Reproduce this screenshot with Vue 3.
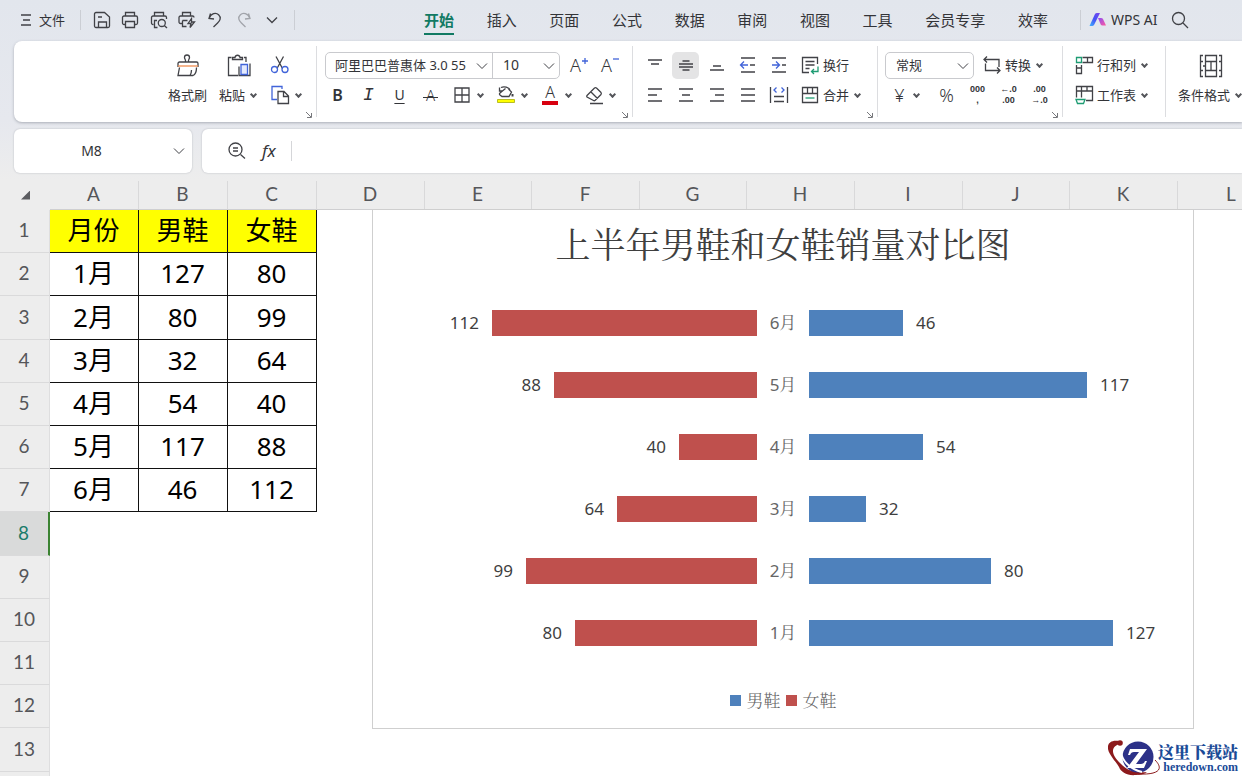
<script setup>
import { ref } from 'vue'

const icons = {
  menu: '<path d="M1 3h10M3 8h7M1 13h10"/>',
  save: '<path d="M16 17.500H4a1.500 1.500 0 0 1-1.500-1.500V4A1.500 1.500 0 0 1 4 2.500h8.500l5 4.500v9a1.500 1.500 0 0 1-1.500 1.500z"/><path d="M6.500 17.500v-5.500h8v5.500M6 7h4"/>',
  print: '<path d="M5.500 6V2.500h9V6M5.500 14.500H4A1.500 1.500 0 0 1 2.500 13V7.500A1.500 1.500 0 0 1 4 6h12a1.500 1.500 0 0 1 1.500 1.500V13a1.500 1.500 0 0 1-1.500 1.500h-1.500"/><path d="M5.500 11.500h9v6h-9z"/>',
  preview: '<path d="M5.500 6V2.500h9V6M4.500 14.500H4A1.500 1.500 0 0 1 2.500 13V7.500A1.500 1.500 0 0 1 4 6h12a1.500 1.500 0 0 1 1.500 1.500V9M8 10.500H5.500v7h3"/><circle cx="12.800" cy="13" r="3.500"/><path d="M15.300 15.500l2.700 2.500"/>',
  quick: '<path d="M5.500 6V2.500h8V6M5 13.500H3.500A1.500 1.500 0 0 1 2 12V7.500A1.500 1.500 0 0 1 3.500 6h12A1.500 1.500 0 0 1 17 7.500M5.500 10.500v6h4M5.500 10.500h5"/><path d="M14.500 8.500l-3.500 5h3l-1 4 4.500-5.500h-3z"/>',
  undo: '<path d="M5.500 3.500l-1.500 5 5 .5M4.200 8.300C6 3.200 11 2.200 13.600 4.700c3 2.800 1.400 6-1 8.300L8.500 17"/>',
  redo: '<path d="M14.500 3.500l1.500 5-5 .5M15.800 8.300C14 3.200 9 2.200 6.400 4.700c-3 2.800-1.400 6 1 8.300l4.100 4"/>',
  down: '<path d="M5 7.500l5 5 5-5"/>',
  search: '<circle cx="8.500" cy="8.500" r="6"/><path d="M13 13l5 5"/>',
  brush: '<path d="M9.500 8V6.500C9.500 5.500 8.500 4.800 8.500 3.500a2.500 2.500 0 0 1 5 0c0 1.300-1 2-1 3V8M2 13V9.500A1.500 1.500 0 0 1 3.500 8h17A1.500 1.500 0 0 1 22 9.500V13M3.500 13.500L2 21.500h15c2.500-1 3.500-5 3.500-8M15.500 16c0 2-.5 4-1.500 5.500"/><path stroke="#f08b4f" d="M2 12h20"/>',
  paste: '<path d="M4.500 3.500H1.500v18H11M17 3.500h2V8"/><path d="M5.500 5.500h10V3.500h-2.500c-.5-3-4.500-3-5 0H5.500z"/><path d="M12 12.500v9h11v-12"/><path stroke="#4164d9" fill="#e4eafe" d="M14 10.500h6.500v10H14z"/>',
  cut: '<path d="M6 1.500l6.500 12M13.500 1.500l-6.500 12"/><g stroke="#4164d9"><circle cx="4.500" cy="14.500" r="3"/><circle cx="15" cy="14.500" r="3"/></g>',
  copy: '<path stroke="#4164d9" d="M7 14.500H2v-13h10V4"/><path d="M8 6.500h6l4.500 4.500v7.500H8zM13.500 7v4.500h5"/>',
  fontUp: '<path stroke="#4164d9" d="M1 4h6M4 1v6"/>',
  fontDown: '<path stroke="#4164d9" d="M1 2h6"/>',
  border: '<path d="M3 3h14v14H3zM10 3v14M3 10h14"/>',
  fill: '<path d="M5 2.500c3-1.500 8-.5 9 3M3.500 2.500v3.500h3M9.500 3.500L4 8q-1 1 0 2l2 1.500h7L15.500 7l-3-3"/><path stroke-width="2" d="M16.500 9v2.500"/><path fill="#ffff00" stroke="#b9bd22" stroke-width="1" d="M1.500 14.500h17v3h-17z"/>',
  eraser: '<path d="M3 10.500L10.500 3q1-.7 2 0L17 7.500q.7 1 0 2L11 15.500q-.8.500-1.500 0L3 12q-.6-.7 0-1.500zM7 7l6.500 6.500M6 18.500h13"/>',
  top: '<path d="M3 5h14M6 9h8"/>',
  middle: '<path d="M6.500 6h7M3 9h14M3 12h14M6.500 15h7"/>',
  bottom: '<path d="M6 11h8M3 15h14"/>',
  outdent: '<path d="M3 3h14M12 10h5M3 17h14"/><path stroke="#4164d9" d="M10 10H2.500M6 6.500L2.500 10 6 13.500"/>',
  indent: '<path d="M3 3h14M13 10h4M3 17h14"/><path stroke="#4164d9" d="M3 10h7.500M7 6.500l3.500 3.500L7 13.500"/>',
  left: '<path d="M3 4h14M3 10h9M3 16h14"/>',
  center: '<path d="M3 4h14M6 10h8M3 16h14"/>',
  right: '<path d="M3 4h14M8 10h9M3 16h14"/>',
  justify: '<path d="M3 4h14M3 10h14M3 16h14"/>',
  spread: '<path d="M1.500 2v16M18.500 2v16M5 11.500h10M5 16.500h10"/><path stroke="#4164d9" d="M7.500 2.500L5 5l2.500 2.500M12.500 2.500L15 5l-2.500 2.500"/>',
  wrap: '<path d="M9 17.500H2.500v-15h15V9M5.500 6.500h9M5.500 10h9M5.500 13.500h4"/><path stroke="#1e9c73" d="M18 11.500v5h-6M14 14l-2.500 2.500L14 19"/>',
  merge: '<path d="M2.500 2.500h15v15h-15zM2.500 8.500h15M7.500 2.500v6M12.500 2.500v6"/><path stroke="#1e9c73" d="M5.500 13h9"/>',
  convert: '<path d="M5 1.500L2 4.500l3 3M2 4.500h15V12M15 12.500l3 3-3 3M18 15.500H3.500V8.500"/>',
  rowcol: '<path d="M8.500 2.500h10v5h-10M13.500 2.500v5M2.500 10v8.500h5V10M2.500 13h5"/><path stroke="#1e9c73" d="M2.500 2.500h5v5h-5z"/>',
  worksheet: '<path d="M2.500 12.500v-11h16v14H12M2.500 6h16M7.500 1.500v11M13 1.500v4.500"/><path stroke="#1e9c73" d="M2 14.500h9l-1.500 4h-6z"/>',
  conditional: '<path d="M4 1.500H1.500v21H4M20 1.500h2.500v21H20M1.500 7.500H4M1.500 16.500H4M20 7.500h2.500M20 16.500h2.500M6.500 1.500h11v6h-11zM6.500 16.500h11v6h-11zM12 7.500v9M4 12h3M6.500 7.500v9M17.500 7.500v9"/>',
  lookup: '<circle cx="8.500" cy="8.500" r="6.500"/><path d="M13.500 13.500l4.500 4M6 7h5M6 10h5"/>'
}

const quickAccess = [
  ['save', '保存'], ['print', '打印'], ['preview', '打印预览'], ['quick', '快速打印'],
  ['undo', '撤销'], ['redo', '恢复'], ['down', '更多']
]
const tabs = ['开始', '插入', '页面', '公式', '数据', '审阅', '视图', '工具', '会员专享', '效率']
const activeTab = ref('开始')
const vertical = [['top', '顶端对齐'], ['middle', '垂直居中'], ['bottom', '底端对齐'], ['outdent', '减少缩进'], ['indent', '增加缩进']]
const horizontal = [['left', '左对齐'], ['center', '水平居中'], ['right', '右对齐'], ['justify', '两端对齐'], ['spread', '分散对齐']]

const cellName = ref('M8')
const formula = ref('')
const columns = [
  ['A', 89], ['B', 89], ['C', 89], ['D', 108], ['E', 107], ['F', 108], ['G', 107],
  ['H', 108], ['I', 108], ['J', 107], ['K', 108], ['L', 108]
]
const numberedRows = 13
const data = [
  ['月份', '男鞋', '女鞋'],
  ['1月', 127, 80],
  ['2月', 80, 99],
  ['3月', 32, 64],
  ['4月', 54, 40],
  ['5月', 117, 88],
  ['6月', 46, 112]
]
const months = data.slice(1).reverse()
const axisMin = 10
const barStyle = (v) => ({ width: Math.round((v - axisMin) * 2.6) + 'px' })
</script>

<template>
  <div class="app">
    <header class="topbar">
      <button class="file"><svg class="i-menu" viewBox="0 0 12 16" v-html="icons.menu" />文件</button>
      <span class="rule" />
      <div class="quick">
        <button v-for="[icon, label] in quickAccess" :key="icon" :class="{ faded: icon === 'redo' }" :aria-label="label">
          <svg viewBox="0 0 20 20" v-html="icons[icon]" />
        </button>
      </div>
      <span class="rule" />
      <nav class="tabs">
        <button v-for="t in tabs" :key="t" :class="{ on: t === activeTab }" @click="activeTab = t">{{ t }}</button>
      </nav>
      <span class="rule" />
      <div class="assist">
        <button class="ai">
          <svg class="i-ai" viewBox="0 0 18 16">
            <defs>
              <linearGradient id="aiBlue" x1="0" y1="1" x2="1" y2="0"><stop offset="0" stop-color="#3fb4ff" /><stop offset=".5" stop-color="#4450f5" /><stop offset="1" stop-color="#7b45ee" /></linearGradient>
              <linearGradient id="aiPink" x1="0" y1="0" x2="1" y2="1"><stop offset="0" stop-color="#8b4df5" /><stop offset="1" stop-color="#ff5a9e" /></linearGradient>
            </defs>
            <path fill="url(#aiBlue)" stroke="none" d="M6 2q.6-1 2-1h3L5 13q-.6 1-2 1H.500z" />
            <path fill="url(#aiPink)" stroke="none" d="M9 6h3q1.500 0 2 1l3 6.500h-3.500q-1.300 0-1.800-1z" />
          </svg>
          WPS AI
        </button>
        <button aria-label="搜索"><svg viewBox="0 0 20 20" v-html="icons.search" /></button>
      </div>
    </header>

    <section class="ribbon">
      <div class="group clipboard">
        <button class="large"><svg class="i-large" viewBox="0 0 24 24" v-html="icons.brush" /><span>格式刷</span></button>
        <button class="large"><svg class="i-large" viewBox="0 0 24 24" v-html="icons.paste" /><span>粘贴<i class="chev" /></span></button>
        <div class="stack">
          <button class="row" aria-label="剪切"><svg viewBox="0 0 20 20" v-html="icons.cut" /></button>
          <button class="row" aria-label="复制"><svg viewBox="0 0 20 20" v-html="icons.copy" /><i class="chev" /></button>
        </div>
        <svg class="launch" viewBox="0 0 8 8"><path d="M1 1l5 5M6.500 2v4.500H2" /></svg>
      </div>

      <div class="group font">
        <div class="row">
          <div class="combo">
            <label class="pick family">
              <select aria-label="字体"><option>阿里巴巴普惠体 3.0 55</option></select>
              <svg class="i-down" viewBox="0 0 20 20" v-html="icons.down" />
            </label>
            <label class="pick size">
              <select aria-label="字号"><option>10</option></select>
              <svg class="i-down" viewBox="0 0 20 20" v-html="icons.down" />
            </label>
          </div>
          <button class="tool grow">A<svg viewBox="0 0 8 8" v-html="icons.fontUp" /></button>
          <button class="tool grow">A<svg viewBox="0 0 8 8" v-html="icons.fontDown" /></button>
        </div>
        <div class="row">
          <button class="tool bold">B</button>
          <button class="tool italic">I</button>
          <button class="tool under">U</button>
          <button class="tool strike">A</button>
          <button class="menu" aria-label="边框"><svg viewBox="0 0 20 20" v-html="icons.border" /><i class="chev" /></button>
          <button class="menu" aria-label="填充颜色"><svg viewBox="0 0 20 20" v-html="icons.fill" /><i class="chev" /></button>
          <button class="menu"><span class="ink">A</span><i class="chev" /></button>
          <button class="menu" aria-label="清除"><svg viewBox="0 0 20 20" v-html="icons.eraser" /><i class="chev" /></button>
        </div>
        <svg class="launch" viewBox="0 0 8 8"><path d="M1 1l5 5M6.500 2v4.500H2" /></svg>
      </div>

      <div class="group align">
        <div class="row">
          <button v-for="[icon, label] in vertical" :key="icon" class="tool" :class="{ pressed: icon === 'middle' }" :aria-label="label">
            <svg viewBox="0 0 20 20" v-html="icons[icon]" />
          </button>
          <button class="named"><svg viewBox="0 0 20 20" v-html="icons.wrap" />换行</button>
        </div>
        <div class="row">
          <button v-for="[icon, label] in horizontal" :key="icon" class="tool" :aria-label="label">
            <svg viewBox="0 0 20 20" v-html="icons[icon]" />
          </button>
          <button class="named"><svg viewBox="0 0 20 20" v-html="icons.merge" />合并<i class="chev" /></button>
        </div>
        <svg class="launch" viewBox="0 0 8 8"><path d="M1 1l5 5M6.500 2v4.500H2" /></svg>
      </div>

      <div class="group number">
        <div class="row">
          <div class="combo">
            <label class="pick format">
              <select aria-label="数字格式"><option>常规</option></select>
              <svg class="i-down" viewBox="0 0 20 20" v-html="icons.down" />
            </label>
          </div>
          <button class="named"><svg viewBox="0 0 20 20" v-html="icons.convert" />转换<i class="chev" /></button>
        </div>
        <div class="row">
          <button class="menu yen"><span>¥</span><i class="chev" /></button>
          <button class="tool percent">%</button>
          <button class="tool digits"><span>000</span><span>,</span></button>
          <button class="tool digits"><span>←.0</span><span>.00</span></button>
          <button class="tool digits"><span>.00</span><span>→.0</span></button>
        </div>
        <svg class="launch" viewBox="0 0 8 8"><path d="M1 1l5 5M6.500 2v4.500H2" /></svg>
      </div>

      <div class="group cells">
        <div class="row"><button class="named"><svg viewBox="0 0 20 20" v-html="icons.rowcol" />行和列<i class="chev" /></button></div>
        <div class="row"><button class="named"><svg viewBox="0 0 20 20" v-html="icons.worksheet" />工作表<i class="chev" /></button></div>
      </div>

      <div class="group styles">
        <button class="large"><svg class="i-large" viewBox="0 0 24 24" v-html="icons.conditional" /><span>条件格式<i class="chev" /></span></button>
      </div>
    </section>

    <section class="formula">
      <div class="namebox">
        <input v-model="cellName" aria-label="名称框">
        <button aria-label="展开名称框"><svg class="i-down" viewBox="0 0 20 20" v-html="icons.down" /></button>
      </div>
      <div class="fxbox">
        <button aria-label="查找"><svg viewBox="0 0 20 20" v-html="icons.lookup" /></button>
        <button class="fx">fx</button>
        <input v-model="formula" aria-label="编辑栏">
      </div>
    </section>

    <main class="sheet">
      <table>
        <colgroup>
          <col class="c-head">
          <col v-for="[name, width] in columns" :key="name" :style="{ width: width + 'px' }">
        </colgroup>
        <thead>
          <tr>
            <th class="corner" aria-label="全选"><i /></th>
            <th v-for="[name] in columns" :key="name" scope="col">{{ name }}</th>
          </tr>
        </thead>
        <tbody>
          <tr v-for="r in numberedRows + 1" :key="r" :class="{ current: r === 8, title: r === 1 }">
            <th scope="row">{{ r > numberedRows ? '' : r }}</th>
            <td v-for="([name], c) in columns" :key="name" :class="{ filled: data[r - 1] && c < 3 }">{{ data[r - 1]?.[c] }}</td>
          </tr>
        </tbody>
      </table>

      <figure class="chart">
        <figcaption>上半年男鞋和女鞋销量对比图</figcaption>
        <div class="plot">
          <div v-for="[month, men, women] in months" :key="month" class="pair">
            <div class="side women"><span>{{ women }}</span><i class="bar" :style="barStyle(women)" /></div>
            <span class="month">{{ month }}</span>
            <div class="side men"><i class="bar" :style="barStyle(men)" /><span>{{ men }}</span></div>
          </div>
        </div>
        <div class="legend">
          <span class="men"><i />男鞋</span>
          <span class="women"><i />女鞋</span>
        </div>
      </figure>
    </main>

    <a class="site" href="#">
      <svg class="i-site" viewBox="0 0 54 36">
        <path fill="#8c1a1c" stroke="none" d="M11 1C1-1-3 6 2 14c4 7 7 9 9 13 2 5 8 9 17 8 5 0 9-1 11-3-11 1-20-1-27-9C5 16 1 8 11 4z" />
        <circle cx="12" cy="3" r="2.800" fill="#8c1a1c" stroke="none" />
        <circle cx="30" cy="17" r="15.500" fill="#2c3188" stroke="none" />
        <path fill="none" stroke="#8c1a1c" stroke-width="1" d="M47 20c9 9 4 15-17 14" />
        <path fill="none" stroke="#fff" stroke-width="2" d="M13 12c1 9 9 17 21 20" />
        <path fill="#fff" stroke="none" d="M22 9h17L28 24h5q3 0 4-3h2l-3 7H19l12-16h-5q-3 0-4 3h-2z" />
      </svg>
      <span><b>这里下载站</b><small>heredown.com</small></span>
    </a>
  </div>
</template>

<style>
body {
  overflow: hidden;
}
</style>

<style scoped>
.app {
  --ink: #333438;
  --ui: "Noto Sans", "Noto Sans CJK SC", sans-serif;
  --song: "Noto Serif CJK SC", "Noto Sans CJK SC", serif;
  position: relative;
  display: flex;
  flex-direction: column;
  height: 100vh;
  overflow: hidden;
  background: linear-gradient(#e2e6ed, #e6e8ee 120px, #ededed 180px);
  color: var(--ink);
  font: 13px/20px var(--ui);
}
.app *, .app *::before, .app *::after { box-sizing: border-box; }
button, input, select {
  border: 0;
  padding: 0;
  background: none;
  color: inherit;
  font: inherit;
  outline: 0;
}
button {
  display: flex;
  align-items: center;
  justify-content: center;
  white-space: nowrap;
}
svg {
  flex: none;
  display: block;
  width: 20px;
  height: 20px;
  fill: none;
  stroke: #414247;
  stroke-width: 1.3;
}
.chev {
  flex: none;
  width: 5px;
  height: 5px;
  margin: 0 2px 2px;
  border: solid #55565b;
  border-width: 0 2px 2px 0;
  transform: rotate(45deg);
}

.topbar {
  display: flex;
  align-items: center;
  flex: none;
  height: 41px;
  padding: 0 0 1px 20px;
}
.file { gap: 7px; }
.i-menu { width: 12px; height: 16px; }
.rule {
  width: 1px;
  height: 20px;
  background: #cbced4;
}
.file + .rule { margin-left: 15px; }
.quick {
  display: flex;
  justify-content: space-between;
  width: 190px;
  margin: 0 12px 0 11px;
}
.faded { opacity: .4; }
.tabs {
  display: flex;
  flex: 1;
  justify-content: space-between;
  padding: 0 32px 0 129px;
}
.tabs button {
  height: 28px;
  margin-top: 2px;
  padding-bottom: 1px;
  border-bottom: 2px solid transparent;
  font-size: 15px;
}
.tabs .on {
  border-color: #117a63;
  color: #117a63;
  font-weight: 700;
}
.assist {
  display: flex;
  gap: 12px;
  width: 161px;
  padding-left: 8px;
}
.ai { gap: 4px; font-size: 14px; }
.i-ai { width: 18px; height: 16px; }

.ribbon {
  display: flex;
  flex: none;
  height: 81px;
  margin-left: 14px;
  border-radius: 8px 0 0 8px;
  background: #fff;
  box-shadow: 0 1px 3px #a9adb6;
}
.group {
  position: relative;
  flex: none;
  padding-top: 9px;
}
.group + .group::before {
  content: "";
  position: absolute;
  left: 0;
  top: 5px;
  bottom: 5px;
  width: 1px;
  background: #dcdde0;
}
.row {
  display: flex;
  align-items: center;
  height: 30px;
}
.row .chev, .large .chev { margin-left: 6px; }
.large {
  flex-direction: column;
  justify-content: flex-start;
  gap: 7px;
  padding-top: 4px;
}
.large span { display: flex; align-items: center; }
.i-large { width: 24px; height: 24px; }
.clipboard {
  display: flex;
  align-items: flex-start;
  gap: 12px;
  width: 302px;
  padding-left: 154px;
}
.font { width: 316px; padding-left: 6px; }
.align { width: 245px; padding-left: 7px; }
.number { width: 185px; padding-left: 8px; }
.cells { width: 103px; padding-left: 13px; }
.styles { padding-left: 13px; }
.launch {
  position: absolute;
  right: 3px;
  bottom: 3px;
  width: 8px;
  height: 8px;
  stroke: #77787c;
  stroke-width: 1;
}
.combo {
  display: flex;
  height: 27px;
  border: 1px solid #c9cace;
  border-radius: 5px;
}
.font .combo { margin: 0 4px 0 3px; }
.pick { position: relative; display: flex; }
.pick + .pick { border-left: 1px solid #c9cace; }
.pick select {
  appearance: none;
  width: 100%;
  padding-left: 9px;
}
.family { width: 166px; }
.size { width: 67px; }
.size select { padding-left: 10px; font-size: 14px; }
.format { width: 87px; }
.number .pick select { padding-left: 10px; }
.pick .i-down {
  position: absolute;
  right: 0;
  top: 3px;
  pointer-events: none;
}
.i-down { stroke-width: 1; }
.tool {
  width: 27px;
  height: 27px;
  margin: 0 2px;
  border-radius: 5px;
  font-size: 16px;
}
.pressed { background: #e4e4e5; }
.grow { font-size: 18px; font-weight: 300; }
.grow svg { width: 8px; height: 8px; margin-bottom: 8px; }
.bold { font-weight: 600; }
.italic { font-family: "Liberation Mono", monospace; font-style: italic; font-size: 18px; }
.under { text-decoration: underline; text-underline-offset: 3px; text-decoration-thickness: 1px; font-size: 14px; }
.strike { position: relative; font-size: 15px; font-weight: 300; }
.strike::after {
  content: "";
  position: absolute;
  left: 6px;
  right: 6px;
  top: 15px;
  height: 1px;
  background: var(--ink);
}
.menu {
  justify-content: flex-start;
  width: 44px;
  padding-left: 6px;
}
.ink {
  width: 16px;
  height: 20px;
  margin: 0 2px;
  border-bottom: 4px solid #d8000f;
  font-size: 16px;
  font-weight: 300;
  line-height: 15px;
}
.named svg { margin-right: 3px; }
.number .named { padding-left: 8px; }
.cells .named { margin-left: -1px; }
.align .named { padding-left: 6px; }
.yen { width: 46px; padding-left: 6px; }
.yen span { width: 17px; font-size: 18px; font-weight: 300; }
.percent { font-size: 18px; font-weight: 300; }
.digits {
  flex-direction: column;
  font: bold 9px/11px "Liberation Sans", sans-serif;
}

.formula {
  display: flex;
  flex: none;
  gap: 10px;
  height: 59px;
  padding: 7px 0 8px 14px;
}
.namebox, .fxbox {
  display: flex;
  align-items: center;
  border-radius: 6px;
  background: #fff;
  box-shadow: 0 0 2px #b4b7be;
}
.namebox { width: 178px; padding-right: 3px; }
.namebox input { flex: 1; min-width: 0; text-align: center; font-size: 14px; }
.fxbox { flex: 1; padding-left: 25px; border-radius: 6px 0 0 6px; }
.fx {
  margin: 0 15px;
  font: italic 17px/20px "Noto Sans", sans-serif;
}
.fxbox input {
  flex: 1;
  min-width: 0;
  height: 20px;
  padding-left: 8px;
  border-left: 1px solid #d5d6d9;
}

.sheet {
  position: relative;
  flex: 1;
  overflow: hidden;
  background: #fff;
}
table {
  width: 0;
  table-layout: fixed;
  border-collapse: separate;
  border-spacing: 0;
}
.c-head { width: 50px; }
th, td { padding: 0 1px 2px 0; text-align: center; }
th {
  background: #ededed;
  color: #55565a;
  font: 19px/26px Lato, sans-serif;
}
thead th {
  height: 29px;
  border-bottom: 1px solid #cfcfd1;
  border-right: 1px solid #d9d9da;
}
thead .corner { border-color: #ededed; }
.corner i {
  display: block;
  margin: 2px 0 0 21px;
  width: 9px;
  height: 9px;
  background: #5b5c60;
  clip-path: polygon(100% 0, 100% 100%, 0 100%);
}
tbody tr { height: 43px; }
tbody tr:nth-child(5n + 3) { height: 44px; }
tbody th { border-right: 1px solid #dededf; border-bottom: 1px solid #dadadb; }
.current th {
  border-right: 2px solid #3b8332;
  background: #d9dada;
  color: #1a7c6a;
}
.filled {
  border: solid #111;
  border-width: 0 1px 1px 0;
  color: #000;
  font: 26px/38px var(--ui);
}
.title .filled { background: #ff0; }

.chart {
  position: absolute;
  left: 372px;
  top: 28px;
  width: 822px;
  margin: 0;
  border: 1px solid #cfcfcf;
  background: #fff;
  color: #3f3f3f;
}
figcaption {
  height: 82px;
  padding-top: 9px;
  text-align: center;
  font: 35px/48px var(--song);
}
.pair {
  display: grid;
  grid-template-columns: 1fr 52px 1fr;
  align-items: center;
  height: 62px;
}
.side {
  display: flex;
  align-items: center;
  gap: 13px;
  font: 17px/26px "Noto Sans", sans-serif;
}
.side.women { justify-content: flex-end; }
.bar { height: 26px; }
.women i { background: #bf504d; }
.men i { background: #4e81bc; }
.month, .legend {
  color: #666;
  text-align: center;
  font: 17px/26px var(--song);
}
.month { font-family: "Noto Sans", var(--song); }
.legend {
  display: flex;
  justify-content: center;
  gap: 5px;
  height: 64px;
  padding-top: 23px;
  font-weight: 300;
}
.legend span { display: flex; align-items: center; height: 26px; gap: 6px; }
.legend i { width: 11px; height: 11px; }

.site {
  position: absolute;
  right: 4px;
  bottom: 0;
  display: flex;
  color: #1b4b97;
  text-align: right;
  text-decoration: none;
}
.i-site { width: 54px; height: 36px; margin-right: -4px; }
.site b, .site small { display: block; }
.site b { font: 900 16px/18px var(--song); padding-top: 3px; }
.site small { font: bold 12px/12px "Liberation Serif", serif; }
</style>
